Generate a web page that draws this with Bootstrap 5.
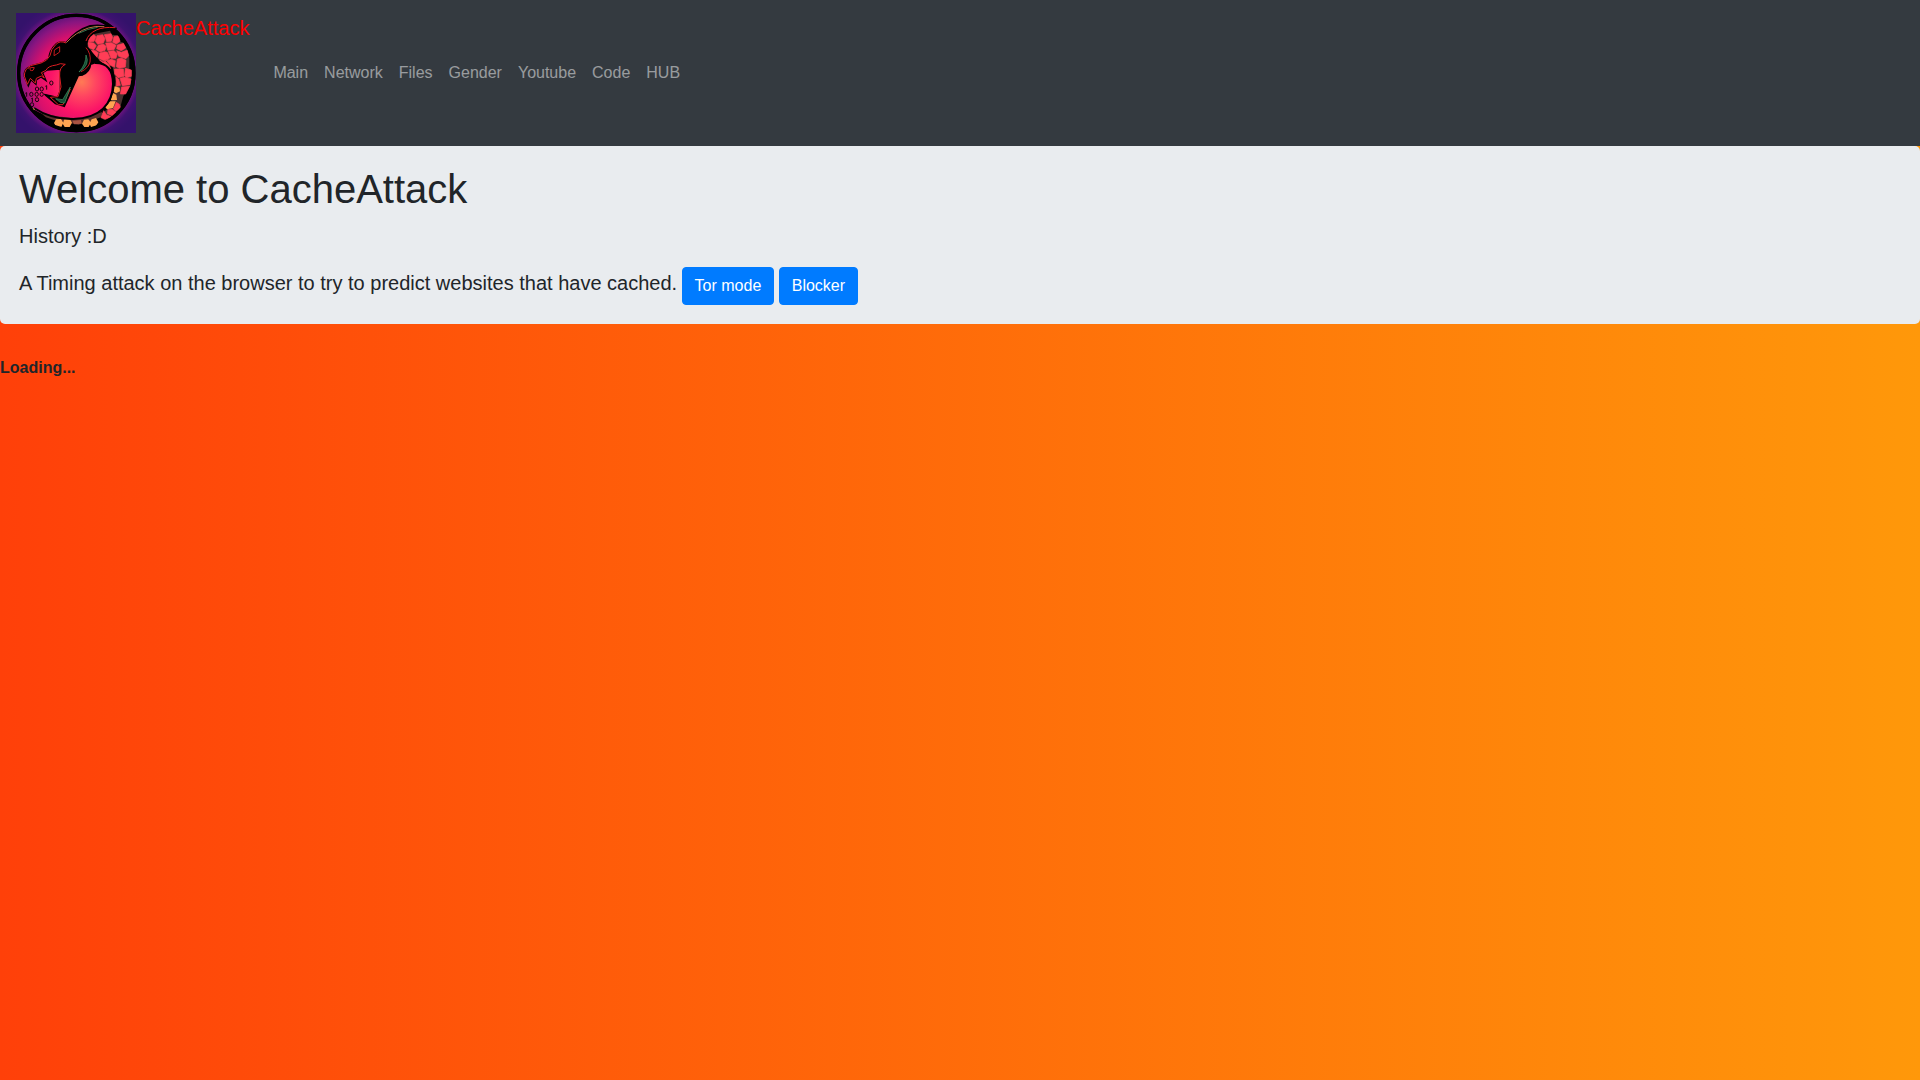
<!DOCTYPE html>
<html lang="en">
<head>
<meta charset="utf-8">
<meta name="viewport" content="width=device-width, initial-scale=1">
<title>CacheAttack</title>
<link href="https://cdn.jsdelivr.net/npm/bootstrap@5.3.0/dist/css/bootstrap.min.css" rel="stylesheet">
<style>
  html { min-height: 100%; background: linear-gradient(to right, #ff4009, #ff980a); }
  body { font-family: "Liberation Sans", Arial, sans-serif; background: transparent; color: #212529; }
  .site-nav { background: #343a40; padding: 8px 16px; }
  .site-nav .navbar-brand { color: #f00; line-height: 30px; padding: 5px 0; margin-right: 16px; }
  .site-nav .nav-link { color: rgba(255, 255, 255, .5); }
  .site-nav .nav-link:hover { color: rgba(255, 255, 255, .75); }
  .site-logo { width: 120px; height: 120px; }
  .hero { background: #e9ecef; border-radius: 5px; padding: 19px; margin-bottom: 32px; }
  .hero h1 { font-size: 40px; line-height: 48px; }
  .hero .intro { font-size: 20px; line-height: 30px; }
  .hero .btn { --bs-btn-bg: #007bff; --bs-btn-border-color: #007bff; --bs-btn-border-radius: 4px; }
</style>
<script src="https://cdn.jsdelivr.net/npm/bootstrap@5.3.0/dist/js/bootstrap.bundle.min.js"></script>
</head>
<body>
<nav class="navbar navbar-expand-sm site-nav">
  <a class="navbar-brand d-flex align-items-start" href="#">
    <svg class="site-logo" viewBox="18 15 360 360" aria-hidden="true">
      <defs>
        <radialGradient id="halo" gradientUnits="userSpaceOnUse" cx="198" cy="195" r="215">
          <stop offset=".8" stop-color="#7b1483"/><stop offset=".9" stop-color="#3e1270"/><stop offset="1" stop-color="#34126b"/>
        </radialGradient>
        <radialGradient id="disc" gradientUnits="userSpaceOnUse" cx="215" cy="222" r="205">
          <stop offset="0" stop-color="#ff7a55"/><stop offset=".2" stop-color="#ff4760"/><stop offset=".45" stop-color="#fb1467"/><stop offset=".68" stop-color="#d8106c"/><stop offset=".88" stop-color="#8a1580"/><stop offset="1" stop-color="#5b1478"/>
        </radialGradient>
        <clipPath id="ring"><circle cx="199" cy="195" r="171"/></clipPath>
      </defs>
      <rect x="18" y="15" width="360" height="360" fill="url(#halo)"/>
      <circle cx="199" cy="195" r="173" fill="url(#disc)" stroke="#000" stroke-width="9"/>
      <g clip-path="url(#ring)">
        <path d="M240 70L330 60L385 170L370 300L270 380H140L62 300Q120 335 190 333C270 333 308 290 309 228C310 185 290 165 255 165L225 130Z" fill="#000"/>
        <path d="M90 313L140 325L190 330L230 329L275 312L280 325L240 340L205 350L130 335L108 328Z" fill="#5c302c"/>
        <path d="M240 80L300 68L306 80L325 82L332 102L346 104L358 150L358 182L366 190L362 232L340 264L331 297L310 322L282 336L272 320L300 296L312 250L318 220L308 178L284 160L268 160L246 128L232 122L228 98Z" fill="#4b302e"/>
        <g fill="#ff3d56" stroke="#ff3d56" stroke-width="2">
          <path d="M235 88L250 78L258 86L252 100L240 102L230 97Z"/><path d="M261 83L278 80L285 92L280 105L263 109L256 99Z"/><path d="M283 80L303 77L308 88L304 100L290 101L287 91Z"/><path d="M312 86L325 83L330 100L319 108L308 103Z"/>
          <path d="M233 103L251 105L259 113L251 125L237 119Z"/><path d="M265 112L280 108L288 115L285 127L270 132L258 125Z"/><path d="M287 105L304 104L318 112L312 125L293 127Z"/><path d="M322 111L342 106L347 120L334 128L320 122Z"/>
          <path d="M244 127L256 128L265 134L260 150L248 137Z"/><path d="M269 135L284 131L292 133L300 150L281 158L266 151Z"/><path d="M295 130L312 128L322 137L318 151L303 151Z"/><path d="M320 128L334 133L352 126L356 143L348 152L326 145Z"/>
          <path d="M268 156L280 161L296 153L286 160L298 172L302 182Z"/><path d="M290 158L304 154L316 158L314 178L300 171Z"/><path d="M322 153L334 150L348 157L346 177L328 181L319 176Z"/><path d="M313 183L340 183L342 205L324 209L314 198Z"/><path d="M346 181L364 186L364 205L350 209L344 203Z"/>
          <path d="M318 207L326 214L331 232L319 235Z"/><path d="M330 211L344 208L363 213L360 230L337 233Z"/><path d="M335 237L359 235L347 258L331 258Z"/><path d="M319 283L328 289L332 300L318 310L310 303Z"/>
          <path d="M294 304L307 304L319 313L309 324L292 317Z"/><path d="M281 308L289 320L304 326L286 334L273 329Z"/>
        </g>
        <g fill="#ffa552">
          <path d="M314 235L329 239L330 250L318 256L311 251Z"/><path d="M309 255L319 260L321 276L302 277Z"/><path d="M300 280L317 280L309 300L291 304L286 298Z"/>
          <path d="M138 334L153 333L160 344L154 357L138 356L132 345Z"/><path d="M163 334L180 334L186 344L179 357L164 357L158 347Z"/><path d="M222 335L235 334L243 344L236 357L223 357L216 347Z"/><path d="M245 334L258 330L265 343L256 356L243 357L238 346Z"/>
        </g>
        <path d="M187 338L213 336L215 347L192 349Z" fill="#a95342"/>
      </g>
      <circle cx="199" cy="195" r="173" fill="none" stroke="#000" stroke-width="10"/>
      <path d="M255 165C290 164 309 185 309 228C308 287 270 331 190 333Q125 335 72 300" fill="none" stroke="#000" stroke-width="6"/>
      <path d="M320 61L285 64Q256 69 242 83Q228 98 231 117L248 137L268 160L242 169Q240 190 218 201L205 203L163 295L136 287L103 259L143 268L151 247V183L112 186L98 194L108 218L93 207L79 216L78 229L63 215L55 234L43 205Q39 185 62 174L96 165L116 151Q119 127 135 111Q148 97 168 104Q198 66 240 53Q280 48 320 61Z" fill="#000" stroke="#000" stroke-width="4"/>
      <path d="M169 104Q198 72 235 60Q256 53 283 56" fill="none" stroke="#bc7045" stroke-width="3"/>
      <path d="M206 76Q232 62 263 58" fill="none" stroke="#35734e" stroke-width="3"/>
      <path d="M316 59Q280 56 259 66Q235 77 228 99M168 105Q150 96 137 110Q122 124 120 143Q112 159 93 165L62 173Q43 183 43 204L52 229L61 211L76 225L79 211L94 204L103 210L94 194L108 187Q113 174 139 171Q150 164 166 169Q147 178 149 204L153 237L144 266L121 268L145 290L159 290L181 243" fill="none" stroke="#dc1d22" stroke-width="3"/>
      <path d="M132 143L133 126L149 116V132L139 139ZM55 182Q60 175 73 179L69 187Q57 190 62 181" fill="none" stroke="#c5191e" stroke-width="3"/>
      <path d="M228 119Q244 137 240 162Q235 181 213 191" fill="none" stroke="#c5191e" stroke-width="3"/>
      <path d="M228 141Q242 171 207 192Q228 169 228 141ZM137 272L158 275L181 237L164 285L151 283Z" fill="#174d35" stroke="#3d9262" stroke-width="2"/>
      <g fill="none" stroke="#19040c" stroke-width="3">
        <ellipse cx="124" cy="225" rx="5" ry="6"/><ellipse cx="81" cy="243" rx="5" ry="6"/><ellipse cx="95" cy="243" rx="5" ry="6"/><path d="M106 235L110 233V245M46 256L50 254V266M64 272L67 270V282M49 274V282"/>
        <ellipse cx="64" cy="259" rx="5" ry="6"/><ellipse cx="80" cy="259" rx="5" ry="6"/><ellipse cx="95" cy="259" rx="5" ry="6"/><ellipse cx="81" cy="275" rx="5" ry="6"/><ellipse cx="66" cy="290" rx="5" ry="6"/>
      </g>
      <path d="M68 300L75 303L72 307Z" fill="#d2ac42"/>
    </svg>
    <span>CacheAttack</span>
  </a>
  <button class="navbar-toggler" type="button" data-bs-toggle="collapse" data-bs-target="#mainMenu" aria-controls="mainMenu" aria-expanded="false" aria-label="Toggle navigation"><span class="navbar-toggler-icon"></span></button>
  <div class="collapse navbar-collapse" id="mainMenu">
    <ul class="navbar-nav">
      <li class="nav-item"><a class="nav-link" href="#">Main</a></li>
      <li class="nav-item"><a class="nav-link" href="#">Network</a></li>
      <li class="nav-item"><a class="nav-link" href="#">Files</a></li>
      <li class="nav-item"><a class="nav-link" href="#">Gender</a></li>
      <li class="nav-item"><a class="nav-link" href="#">Youtube</a></li>
      <li class="nav-item"><a class="nav-link" href="#">Code</a></li>
      <li class="nav-item"><a class="nav-link" href="#">HUB</a></li>
    </ul>
  </div>
</nav>
<main>
  <section class="hero">
    <h1 class="mb-2">Welcome to CacheAttack</h1>
    <p class="intro mb-3">History :D</p>
    <div>
      <span class="intro">A Timing attack on the browser to try to predict websites that have cached.</span>
      <button type="button" class="btn btn-primary">Tor mode</button>
      <button type="button" class="btn btn-primary">Blocker</button>
    </div>
  </section>
  <strong>Loading...</strong>
</main>
</body>
</html>
